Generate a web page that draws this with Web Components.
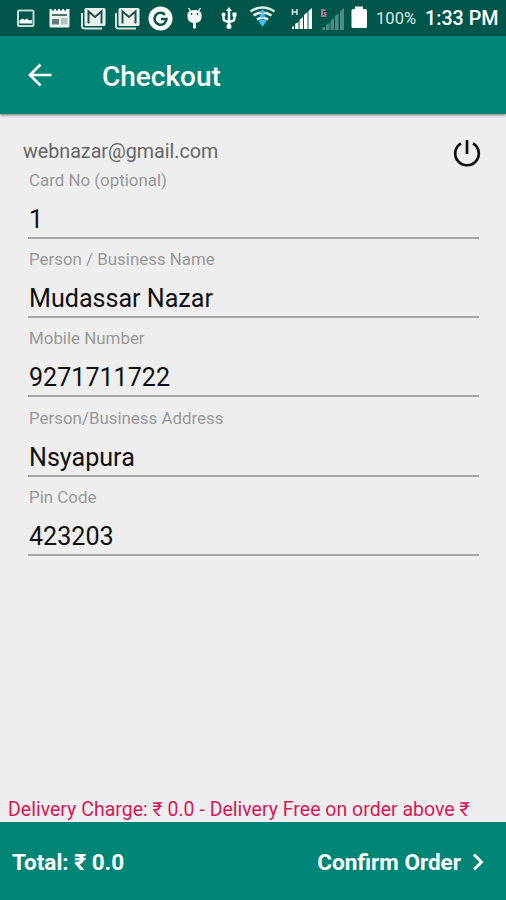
<!DOCTYPE html>
<html lang="en"><head><meta charset="utf-8"><title>Checkout</title>
<style>html,body{margin:0;height:100%}body{background:#eee;font-family:Roboto,"Noto Sans",sans-serif;overflow:hidden}</style></head>
<body><checkout-screen></checkout-screen>
<script>
const define=(name,html)=>customElements.define(name,class extends HTMLElement{
  constructor(){super();this.attachShadow({mode:'open'});}
  connectedCallback(){this.shadowRoot.innerHTML=typeof html==='function'?html(this):html;}
});
const gmail=`<path d="M82 13v13q0 2.500 2.500 2.500H102" fill="none" stroke="#d5e4e1" stroke-width="2"/><rect x="84.500" y="8" width="21" height="18" rx="1.500" fill="#e9f1ef"/><path d="M88.500 23.500V11.500L95 17l6.500-5.500v12" fill="none" stroke="#254f48" stroke-width="2"/>`;
const icons={
 image:[0,42,`<rect x="18" y="10.500" width="15.500" height="15.500" rx="1" fill="none" stroke="#c6dad6" stroke-width="2"/><path d="M19.500 23.500v-3l3-2 2 1.500 2-1.500 3 2 2.500-.5v3.500z" fill="#fff"/>`],
 calendar:[42,35,`<path d="M50 9h2v1.500h2V9h2v1.500h2V9h2v1.500h2V9h2v1.500h2V9h3.500v17q0 1.500-1.500 1.500H51q-1.500 0-1.500-1.500V9z" fill="#eef4f2"/><path d="M52 15h15" stroke="#174a41" stroke-width="1.500"/><path d="M52 19h7v5.500h-7z" fill="#5b7f77"/><path d="M61 18h6.500v6.500H61z" fill="#b2c5c0"/>`],
 mail:[77,33.500,gmail],
 mail2:[77,33.500,gmail],
 google:[144,33,`<circle cx="160.500" cy="18.500" r="12" fill="#fff"/><path d="M165 14.800A6 6 0 1 0 166.500 19H161" fill="none" stroke="#00564a" stroke-width="2.500"/>`],
 android:[177,34,`<path d="M188.500 8l2 3M200.500 8l-2 3" stroke="#fff" stroke-width="1.300"/><path d="M187.500 14q1-4 7-4t7 4v4q-.5 4-5.500 5v4.500q-1.500 2.500-3 0V23q-5-1-5.500-5z" fill="#f5faf9"/><circle cx="191.500" cy="14" r=".9" fill="#00564a"/><circle cx="197.500" cy="14" r=".9" fill="#00564a"/>`],
 usb:[211,33,`<g fill="none" stroke="#f2f8f6" stroke-width="2.500"><path d="M229 11v15M223.500 15v3q0 2.500 2 3l3.500 1 3.500-1q2-.5 2-3v-3"/></g><path d="M229 7l3 4h-6z" fill="#fff"/><circle cx="229" cy="26.500" r="2.500" fill="#fff"/><circle cx="223.500" cy="14.500" r="2" fill="#fff"/><path d="M232.500 12.500h4v4h-4z" fill="#fff"/>`],
 wifi:[244,42,`<g fill="none" stroke-width="2.700"><path d="M250.500 11.500q12-8 24 0" stroke="#dcebe8"/><path d="M253.500 15.500q9-6 18 0" stroke="#eef7f5"/><path d="M257 19.500q5.500-3.500 11 0" stroke="#d8eef2"/></g><path d="M262.500 9l3 4h-6zM259 16l3.500-3 3.500 3-3.500 2zM258.500 21q4-3 8 0l-4 6z" fill="#42bff0"/>`],
 signal:[286,31,`<path d="M292.500 9v6M297 9v6M292.500 12h4.500" stroke="#dbe9e6" stroke-width="1.500"/><path d="M292 29v-2l2-1v3zM295 29v-5l3.500-2v7zM299.500 29v-9l3.500-3v12zM304 29V15l3.500-3v17zM308.500 29V11l3.500-3v21z" fill="#fff"/>`],
 weak:[317,31,`<path d="M325.500 10H322v6h3.500v-3h-2" stroke="#a47786" stroke-width="2" fill="none"/><path d="M322 30v-2l3-1v3zM326 30v-5l3.500-2v7zM330.500 30v-9l3.500-3v12zM335 30V16l3.500-3v17zM340 30V11.500l4-3.500v22z" fill="#4c8c82"/>`],
 battery:[348,28,`<path d="M355 6.500h8V9h2.500q1.500 0 1.500 1.500v16q0 1.500-1.500 1.500H353q-1.500 0-1.500-1.500v-16Q351.500 9 353 9h2z" fill="#fff"/>`]
};
define('status-icon',e=>{const [x,w,m]=icons[e.getAttribute('name')];return `<style>:host{display:block;flex:none}svg{display:block}</style><svg width="${w}" height="36" viewBox="${x} 0 ${w} 36">${m}</svg>`;});
define('status-bar',`<style>:host{display:flex;height:36px;background:#00564a;color:#fff;white-space:nowrap}
span{line-height:38px}.pct{width:49px;font-size:16.500px;letter-spacing:.1px;color:#dceae7}.time{font-size:19.700px;font-weight:500}</style>
${Object.keys(icons).map(n=>`<status-icon name="${n}"></status-icon>`).join('')}<span class="pct">100%</span><span class="time">1:33 PM</span>`);
define('app-toolbar',`<style>:host{display:flex;align-items:center;box-sizing:border-box;height:78px;padding-left:28px;gap:50px;background:#018577;color:#fff;box-shadow:0 1px 3px #0008;z-index:1}
svg{display:block}h1{margin:0;font-size:28px;line-height:32px;font-weight:500;padding-top:3px}</style>
<svg width="24" height="24" viewBox="0 0 24 24"><path d="M23.500 12H3M12.500 1.500 2 12l10.500 10.500" fill="none" stroke="#fff" stroke-width="2.700"/></svg><h1><slot></slot></h1>`);
define('account-row',`<style>:host{display:flex;justify-content:space-between;padding:24px 23px 0;height:31px;color:#666}
span{font-size:19.700px;line-height:28px}svg{display:block}</style><span><slot></slot></span>
<svg width="32" height="30" viewBox="0 0 32 30"><path d="M10 5.300A11.800 11.800 0 1 0 22 5.300M16 2v14" fill="none" stroke="#111" stroke-width="2.700"/></svg>`);
define('text-field',e=>`<style>:host{display:flex;flex-direction:column;box-sizing:border-box;height:79.200px;margin:0 27px 0 28px}
label{font-size:16.900px;line-height:22px;color:#999;padding-left:1px}
.value{padding:0 1px;margin-top:12px;font-size:25.100px;line-height:34px;color:#111;height:34px;border-bottom:2px solid #a6a6a6}</style><label>${e.getAttribute('label')}</label><div class="value"><slot></slot></div>`);
define('delivery-note',`<style>:host{display:block;padding-left:8px;height:26px;font-size:19.530px;line-height:28px;color:#d51958;white-space:nowrap}</style><slot></slot>`);
define('order-bar',`<style>:host{display:flex;justify-content:space-between;align-items:center;box-sizing:border-box;height:78px;padding:1px 21px 0 12px;background:#018577;color:#fff;font-size:22.500px;font-weight:700}
div{display:flex;align-items:center;gap:11px}svg{display:block}</style><span><slot name="total"></slot></span><div><slot name="action"></slot><svg width="13" height="18" viewBox="0 0 13 18"><path d="M2 1.500 9.500 9 2 16.500" fill="none" stroke="#fff" stroke-width="3"/></svg></div>`);
define('checkout-screen',`<style>:host{display:flex;flex-direction:column;width:506px;height:900px;background:#eee}main{flex:1;display:flex;flex-direction:column}
delivery-note{margin-top:auto}</style><status-bar></status-bar><app-toolbar>Checkout</app-toolbar><main><account-row>webnazar@gmail.com</account-row>
<text-field label="Card No (optional)">1</text-field><text-field label="Person / Business Name">Mudassar Nazar</text-field><text-field label="Mobile Number">9271711722</text-field><text-field label="Person/Business Address">Nsyapura</text-field><text-field label="Pin Code">423203</text-field>
<delivery-note>Delivery Charge: ₹ 0.0 - Delivery Free on order above ₹</delivery-note></main><order-bar><span slot="total">Total: ₹ 0.0</span><span slot="action">Confirm Order</span></order-bar>`);
</script></body></html>
